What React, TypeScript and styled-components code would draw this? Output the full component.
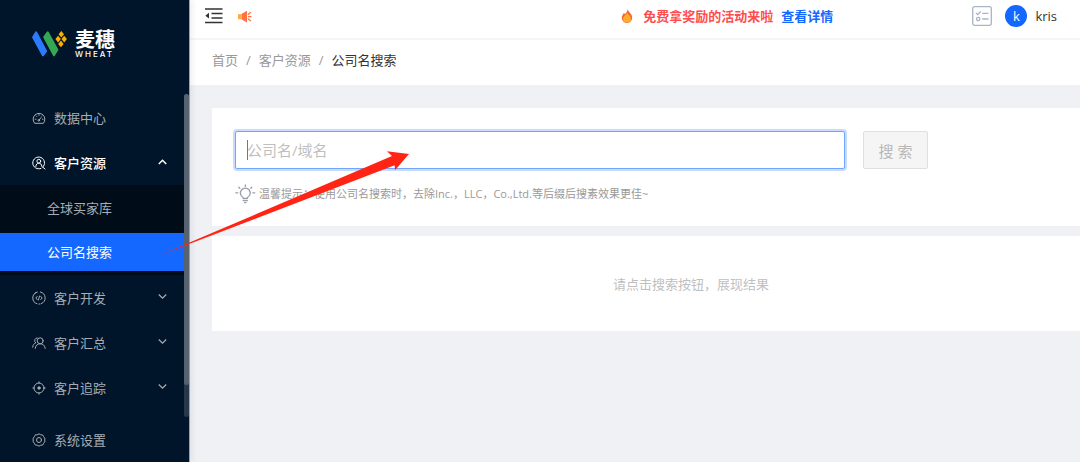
import React from "react";
import styled, { createGlobalStyle, css } from "styled-components";

const GlobalStyle = createGlobalStyle`
  *, *::before, *::after { box-sizing: border-box; }
  body {
    margin: 0;
    background: #f0f1f5;
    color: #333;
    font-family: "Open Sans", "Noto Sans CJK SC", sans-serif;
    font-size: 13px;
    line-height: 20px;
  }
  button, input { font-family: inherit; }
  a { color: inherit; text-decoration: none; }
  ul, ol { list-style: none; margin: 0; padding: 0; }
`;

const Shell = styled.div`
  display: flex;
  min-height: 100vh;
`;

/* ---------- sidebar ---------- */

const Sidebar = styled.aside`
  flex: 0 0 190px;
  background: #001529;
  border-right: 1px solid #9aa1aa;
  box-shadow: 2px 0 6px rgba(0, 21, 41, 0.08);
  z-index: 1;
`;

const Brand = styled.a`
  display: flex;
  align-items: flex-start;
  gap: 8px;
  height: 94px;
  padding: 30px 0 0 32px;
  color: #fff;
`;

const BrandText = styled.span`
  display: flex;
  flex-direction: column;
`;

const BrandName = styled.strong`
  font-size: 20px;
  line-height: 20px;
  font-weight: 700;
`;

const BrandLatin = styled.span`
  font-family: Inter, sans-serif;
  font-size: 8px;
  line-height: 8px;
  font-weight: 500;
  letter-spacing: 2px;
`;

const MenuScroller = styled.div`
  display: flex;
`;

const Menu = styled.ul`
  flex: 1;
  padding: 1px 0 7px;
`;

const ScrollTrack = styled.div`
  width: 5px;
  border-radius: 3px;
  background: #27384a;
`;

const ScrollThumb = styled.div`
  height: 90%;
  border-radius: 3px;
  background: #56626f;
`;

const menuRow = css`
  display: flex;
  align-items: center;
  width: 100%;
  height: 45px;
  padding: 0 17px 0 32px;
  border: 0;
  background: none;
  font-size: 13px;
  line-height: 20px;
  text-align: left;
  cursor: pointer;
`;

const MenuButton = styled.button<{ $open?: boolean }>`
  ${menuRow}
  color: ${(p) => (p.$open ? "#fff" : "#a6adb4")};
  font-weight: ${(p) => (p.$open ? 500 : 400)};
`;

const MenuLink = styled.a`
  ${menuRow}
  color: #a6adb4;
`;

const MenuLabel = styled.span`
  flex: 1;
  margin-left: 8px;
`;

const SubMenu = styled.ul`
  display: flex;
  flex-direction: column;
  gap: 6px;
  padding: 4px 0;
  background: #000c17;
`;

const SubLink = styled.a<{ $active?: boolean }>`
  display: block;
  padding: 9px 0 9px 47px;
  background: ${(p) => (p.$active ? "#1568ff" : "transparent")};
  color: ${(p) => (p.$active ? "#fff" : "#a6adb4")};
`;

/* ---------- main column ---------- */

const Main = styled.div`
  flex: 1;
  min-width: 0;
`;

const Header = styled.header`
  display: flex;
  align-items: center;
  height: 40px;
  padding: 0 23px 6px 15px;
  border-bottom: 2px solid #f4f5f7;
  background: #fff;
`;

const IconButton = styled.button`
  display: flex;
  padding: 0;
  border: 0;
  background: none;
  color: #333;
  cursor: pointer;
`;

const HeaderTools = styled.div`
  display: flex;
  align-items: center;
  gap: 15px;
`;

const Promo = styled.div`
  display: flex;
  align-items: center;
  gap: 8px;
  margin: 0 139px 0 auto;
  color: #ff4d4f;
  font-weight: 700;
`;

const PromoIcon = styled.span`
  display: flex;
  margin-right: 2px;
`;

const PromoLink = styled.a`
  color: #1568ff;
`;

const Account = styled.div`
  display: flex;
  align-items: center;
  gap: 8px;
`;

const Avatar = styled.span`
  width: 22px;
  height: 22px;
  margin-left: 5px;
  border-radius: 50%;
  background: #1568ff;
  color: #fff;
  line-height: 22px;
  text-align: center;
`;

const Crumbs = styled.ol`
  display: flex;
  height: 45px;
  padding: 10px 22px;
  background: #fff;
  color: #999;
`;

const Crumb = styled.li`
  & + &::before {
    content: "/";
    margin: 0 8px;
    color: #999;
  }
`;

const CurrentPage = styled.span`
  color: #333;
`;

const Content = styled.main`
  display: flex;
  flex-direction: column;
  gap: 10px;
  padding: 23px 0 23px 22px;
`;

const Panel = styled.section`
  padding: 23px 23px 22px;
  background: #fff;
`;

const SearchForm = styled.form`
  display: flex;
  gap: 18px;
`;

const Field = styled.div`
  position: relative;
  flex: 1;
  min-width: 0;
  max-width: 610px;
`;

const Caret = styled.span`
  position: absolute;
  top: 9px;
  left: 12px;
  width: 1px;
  height: 20px;
  background: #777;
`;

const SearchInput = styled.input`
  display: block;
  width: 100%;
  height: 38px;
  padding: 0 11px;
  border: 1px solid #6fa5ff;
  border-radius: 2px;
  outline: 0;
  box-shadow: 0 0 0 2px #c9dcff;
  color: #333;
  caret-color: transparent;
  font-size: 15px;
  &::placeholder { color: #bfbfbf; opacity: 1; }
`;

const SearchButton = styled.button`
  flex: 0 0 65px;
  height: 38px;
  padding: 0;
  border: 1px solid #dfdfdf;
  border-radius: 2px;
  background: #f5f5f5;
  color: #b8b8b8;
  font-size: 15px;
`;

const Tip = styled.p`
  display: flex;
  align-items: center;
  gap: 3px;
  margin: 15px 0 0;
  color: #999;
  font-size: 11px;
`;

const EmptyPanel = styled(Panel)`
  padding: 38px 23px 37px 113px;
  color: #bfbfbf;
  text-align: center;
`;

/* pointer drawn from the selected menu entry to the search box */
const Pointer = styled.svg`
  position: absolute;
  left: 159px;
  top: 150px;
  z-index: 2;
  pointer-events: none;
`;

/* ---------- icons ---------- */

const MenuIcon = ({ children }: { children: React.ReactNode }) => (
  <svg width="14" height="14" viewBox="0 0 14 14" fill="none" stroke="currentColor" strokeWidth="1" strokeLinecap="round" strokeLinejoin="round" aria-hidden="true">
    {children}
  </svg>
);

const GaugeIcon = () => (
  <MenuIcon>
    <path d="M2.400 12A5.900 5.900 0 1 1 11.600 12ZM7 9.200 9 6.600M3.200 8.200h.8M10.400 8.200h.6M4.300 5l.5.5M7 3.600v.8M9.800 5l-.2.2" />
    <circle cx="6.800" cy="9.300" r=".8" />
  </MenuIcon>
);

const UserSearchIcon = () => (
  <MenuIcon>
    <path d="M10.8 11.2A5.9 5.9 0 1 0 9 12.4M10.8 11.2 13 13" />
    <circle cx="6.8" cy="5.2" r="1.9" />
    <path d="M3.8 10.4C4 8 5.4 7.2 6.8 7.2S9.7 8 9.9 10.4" />
  </MenuIcon>
);

const DevelopIcon = () => (
  <MenuIcon>
    <path d="M5 1.2A6.1 6.1 0 0 0 5 12.8M3 2.2A6 6 0 0 1 5 1.2M8.4 1A6.1 6.1 0 0 1 9.3 12.6M7 13h1" />
    <path d="M5.2 5.4 3.8 7l1.4 1.6M8.8 5.4 10.2 7 8.8 8.6M7.6 5 6.4 9" />
  </MenuIcon>
);

const PeopleIcon = () => (
  <MenuIcon>
    <circle cx="8.2" cy="4.8" r="3" />
    <path d="M3.2 12.4C3.5 9.3 5.5 7.8 8.2 7.8s4.6 1.5 5 4.6M5.2 1.9A2.8 2.8 0 0 0 3.6 6.8M3.6 6.8C1.9 7.6.9 9 .7 11.2" />
  </MenuIcon>
);

const TargetIcon = () => (
  <MenuIcon>
    <circle cx="7" cy="7" r="5" />
    <circle cx="7" cy="7" r="1.2" fill="currentColor" />
    <path d="M7 .8v1.4M7 11.8v1.4M.8 7h1.4M11.8 7h1.4" />
  </MenuIcon>
);

const SettingIcon = () => (
  <MenuIcon>
    <path d="M5.2 1.8 7 .8l1.8 1 1.9.2.9 1.700 1.200 1.500v3.600l-1.200 1.500-.9 1.700-1.900.2-1.800 1-1.800-1-1.900-.2-.9-1.700-1.200-1.500V5.200l1.200-1.500.9-1.700Z" />
    <circle cx="7" cy="7" r="2.500" />
  </MenuIcon>
);

const Chevron = ({ up }: { up?: boolean }) => (
  <svg width="9" height="9" viewBox="0 0 9 9" fill="none" stroke="currentColor" strokeWidth={up ? 1.5 : 1.2} aria-hidden="true">
    <path d={up ? "M.8 6 4.500 2.300 8.200 6" : "M.8 1.500 4.500 5.200 8.200 1.500"} />
  </svg>
);

const Logo = () => (
  <svg width="35" height="27" viewBox="0 0 35 27" aria-hidden="true">
    <g strokeWidth="2" strokeLinejoin="round">
      <path d="M1.100 7.200 4.100 2.300 14.100 21.200 10.900 25.300Z" fill="#2b7bff" stroke="#2b7bff" />
      <path d="M12.200 7.200 15.700 2.300 25.300 19.800 22 25.300Z" fill="#34a853" stroke="#34a853" />
    </g>
    <g fill="#fbb003">
      <path d="m29.300 1 2.700 3.300-2.700 3.300-2.700-3.300Z" />
      <path d="m26.100 5.800 2.700 3.300-2.700 3.300-2.700-3.300Z" />
      <path d="m32.200 5.800 2.700 3.300-2.700 3.300-2.700-3.300Z" />
      <path d="m28.900 10.600 2.700 3.300-2.700 3.300-2.700-3.300Z" />
    </g>
  </svg>
);

const FoldIcon = () => (
  <svg width="18" height="16" viewBox="0 0 18 16" aria-hidden="true">
    <path d="M0 1h17.500M6.500 5.500h11M6.500 10h11M0 14.500h17.500" stroke="#333" strokeWidth="1.600" />
    <path d="M.3 7.700 4 4.800v5.800Z" fill="#333" />
  </svg>
);

const HornIcon = () => (
  <svg width="14" height="13" viewBox="0 0 14 13" aria-hidden="true">
    <path d="M0 4.200h3v5H0Z" fill="#ffa940" />
    <path d="M3.400 4 9 .8v11.800L3.400 9.300Z" fill="#ff7043" />
    <path d="M10.300 4.300 12.500 2.600M10.500 6.700H13M10.300 9l2.200 1.700" stroke="#ff7043" strokeWidth="1.300" strokeLinecap="round" />
  </svg>
);

const FlameIcon = () => (
  <svg width="12" height="14" viewBox="0 0 12 14" aria-hidden="true">
    <path d="M6.500.3C7.200 2.500 11.200 5 11.200 8.700a5.200 5.200 0 0 1-10.400 0C.8 6.600 2.300 5.500 2.800 4c.7.3 1 .7 1.200 1.300C5.300 4 6.500 2.500 6.500.3Z" fill="#f4692b" />
    <path d="M6.300 3.800C7 5.800 9.900 7.300 9.900 9.700a3.900 3.900 0 0 1-7.800 0C2.100 7.900 3.700 7.300 4.200 6 5.300 5.900 6 5 6.300 3.800Z" fill="#ffab2e" />
  </svg>
);

const TaskIcon = () => (
  <svg width="20" height="20" viewBox="0 0 20 20" fill="none" stroke="#aab4c8" strokeWidth="1.300" strokeLinecap="round" aria-hidden="true">
    <rect x=".7" y=".7" width="18.600" height="18.600" rx="2" />
    <path d="M4.200 7.100 5.800 8.600 8.400 5.800M10.700 7.300h5.300M10.700 13h5.300" />
    <circle cx="6.200" cy="13" r="1.700" />
  </svg>
);

const BulbIcon = () => (
  <svg width="21" height="20" viewBox="0 0 21 20" fill="none" stroke="#9b9fab" strokeWidth="1.300" strokeLinecap="round" aria-hidden="true">
    <path d="M8.200 14.300v-.8a4.900 4.900 0 1 1 4.200 0v.8ZM8.200 16.500h4.200M9.500 18.600h1.600" />
    <path d="M10.300.8v1.600M3.800 3.200l1 1M16.800 3.200l-1 1M.8 8.800h2M17.800 8.800h2" />
  </svg>
);

/* ---------- page ---------- */

const groups = [
  { label: "客户开发", Icon: DevelopIcon },
  { label: "客户汇总", Icon: PeopleIcon },
  { label: "客户追踪", Icon: TargetIcon },
];

export default function App() {
  return (
    <>
      <GlobalStyle />
      <Shell>
        <Sidebar>
          <Brand href="#">
            <Logo />
            <BrandText>
              <BrandName>麦穗</BrandName>
              <BrandLatin>WHEAT</BrandLatin>
            </BrandText>
          </Brand>
          <MenuScroller>
            <Menu>
              <li>
                <MenuLink href="#data">
                  <GaugeIcon />
                  <MenuLabel>数据中心</MenuLabel>
                </MenuLink>
              </li>
              <li>
                <MenuButton type="button" $open aria-expanded="true">
                  <UserSearchIcon />
                  <MenuLabel>客户资源</MenuLabel>
                  <Chevron up />
                </MenuButton>
                <SubMenu>
                  <li><SubLink href="#buyers">全球买家库</SubLink></li>
                  <li><SubLink href="#company" $active aria-current="page">公司名搜索</SubLink></li>
                </SubMenu>
              </li>
              {groups.map(({ label, Icon }) => (
                <li key={label}>
                  <MenuButton type="button" aria-expanded="false">
                    <Icon />
                    <MenuLabel>{label}</MenuLabel>
                    <Chevron />
                  </MenuButton>
                </li>
              ))}
            </Menu>
            <ScrollTrack><ScrollThumb /></ScrollTrack>
          </MenuScroller>
          <MenuLink href="#settings">
            <SettingIcon />
            <MenuLabel>系统设置</MenuLabel>
          </MenuLink>
        </Sidebar>

        <Main>
          <Header>
            <HeaderTools>
              <IconButton type="button" aria-label="收起菜单"><FoldIcon /></IconButton>
              <IconButton type="button" aria-label="公告"><HornIcon /></IconButton>
            </HeaderTools>
            <Promo>
              <PromoIcon><FlameIcon /></PromoIcon>
              <span>免费拿奖励的活动来啦</span>
              <PromoLink href="#promo">查看详情</PromoLink>
            </Promo>
            <Account>
              <IconButton type="button" aria-label="任务"><TaskIcon /></IconButton>
              <Avatar>k</Avatar>
              <span>kris</span>
            </Account>
          </Header>
          <nav aria-label="面包屑">
            <Crumbs>
              <Crumb><a href="#home">首页</a></Crumb>
              <Crumb><a href="#resources">客户资源</a></Crumb>
              <Crumb><CurrentPage aria-current="page">公司名搜索</CurrentPage></Crumb>
            </Crumbs>
          </nav>
          <Content>
            <Panel>
              <SearchForm onSubmit={(e) => e.preventDefault()}>
                <Field>
                  <SearchInput type="text" aria-label="公司名/域名" placeholder="公司名/域名" />
                  <Caret />
                </Field>
                <SearchButton type="submit" disabled>搜 索</SearchButton>
              </SearchForm>
              <Tip>
                <BulbIcon />
                <span>温馨提示：使用公司名搜索时，去除Inc.，LLC，Co.,Ltd.等后缀后搜素效果更佳~</span>
              </Tip>
            </Panel>
            <EmptyPanel>请点击搜索按钮，展现结果</EmptyPanel>
          </Content>
        </Main>
      </Shell>
      <Pointer width="252" height="108" viewBox="0 0 252 108" aria-hidden="true">
        <path d="M0 105.600 233 6 228 1.300 250 4 236 20.300 235.600 15.300Z" fill="#ff2413" />
      </Pointer>
    </>
  );
}
